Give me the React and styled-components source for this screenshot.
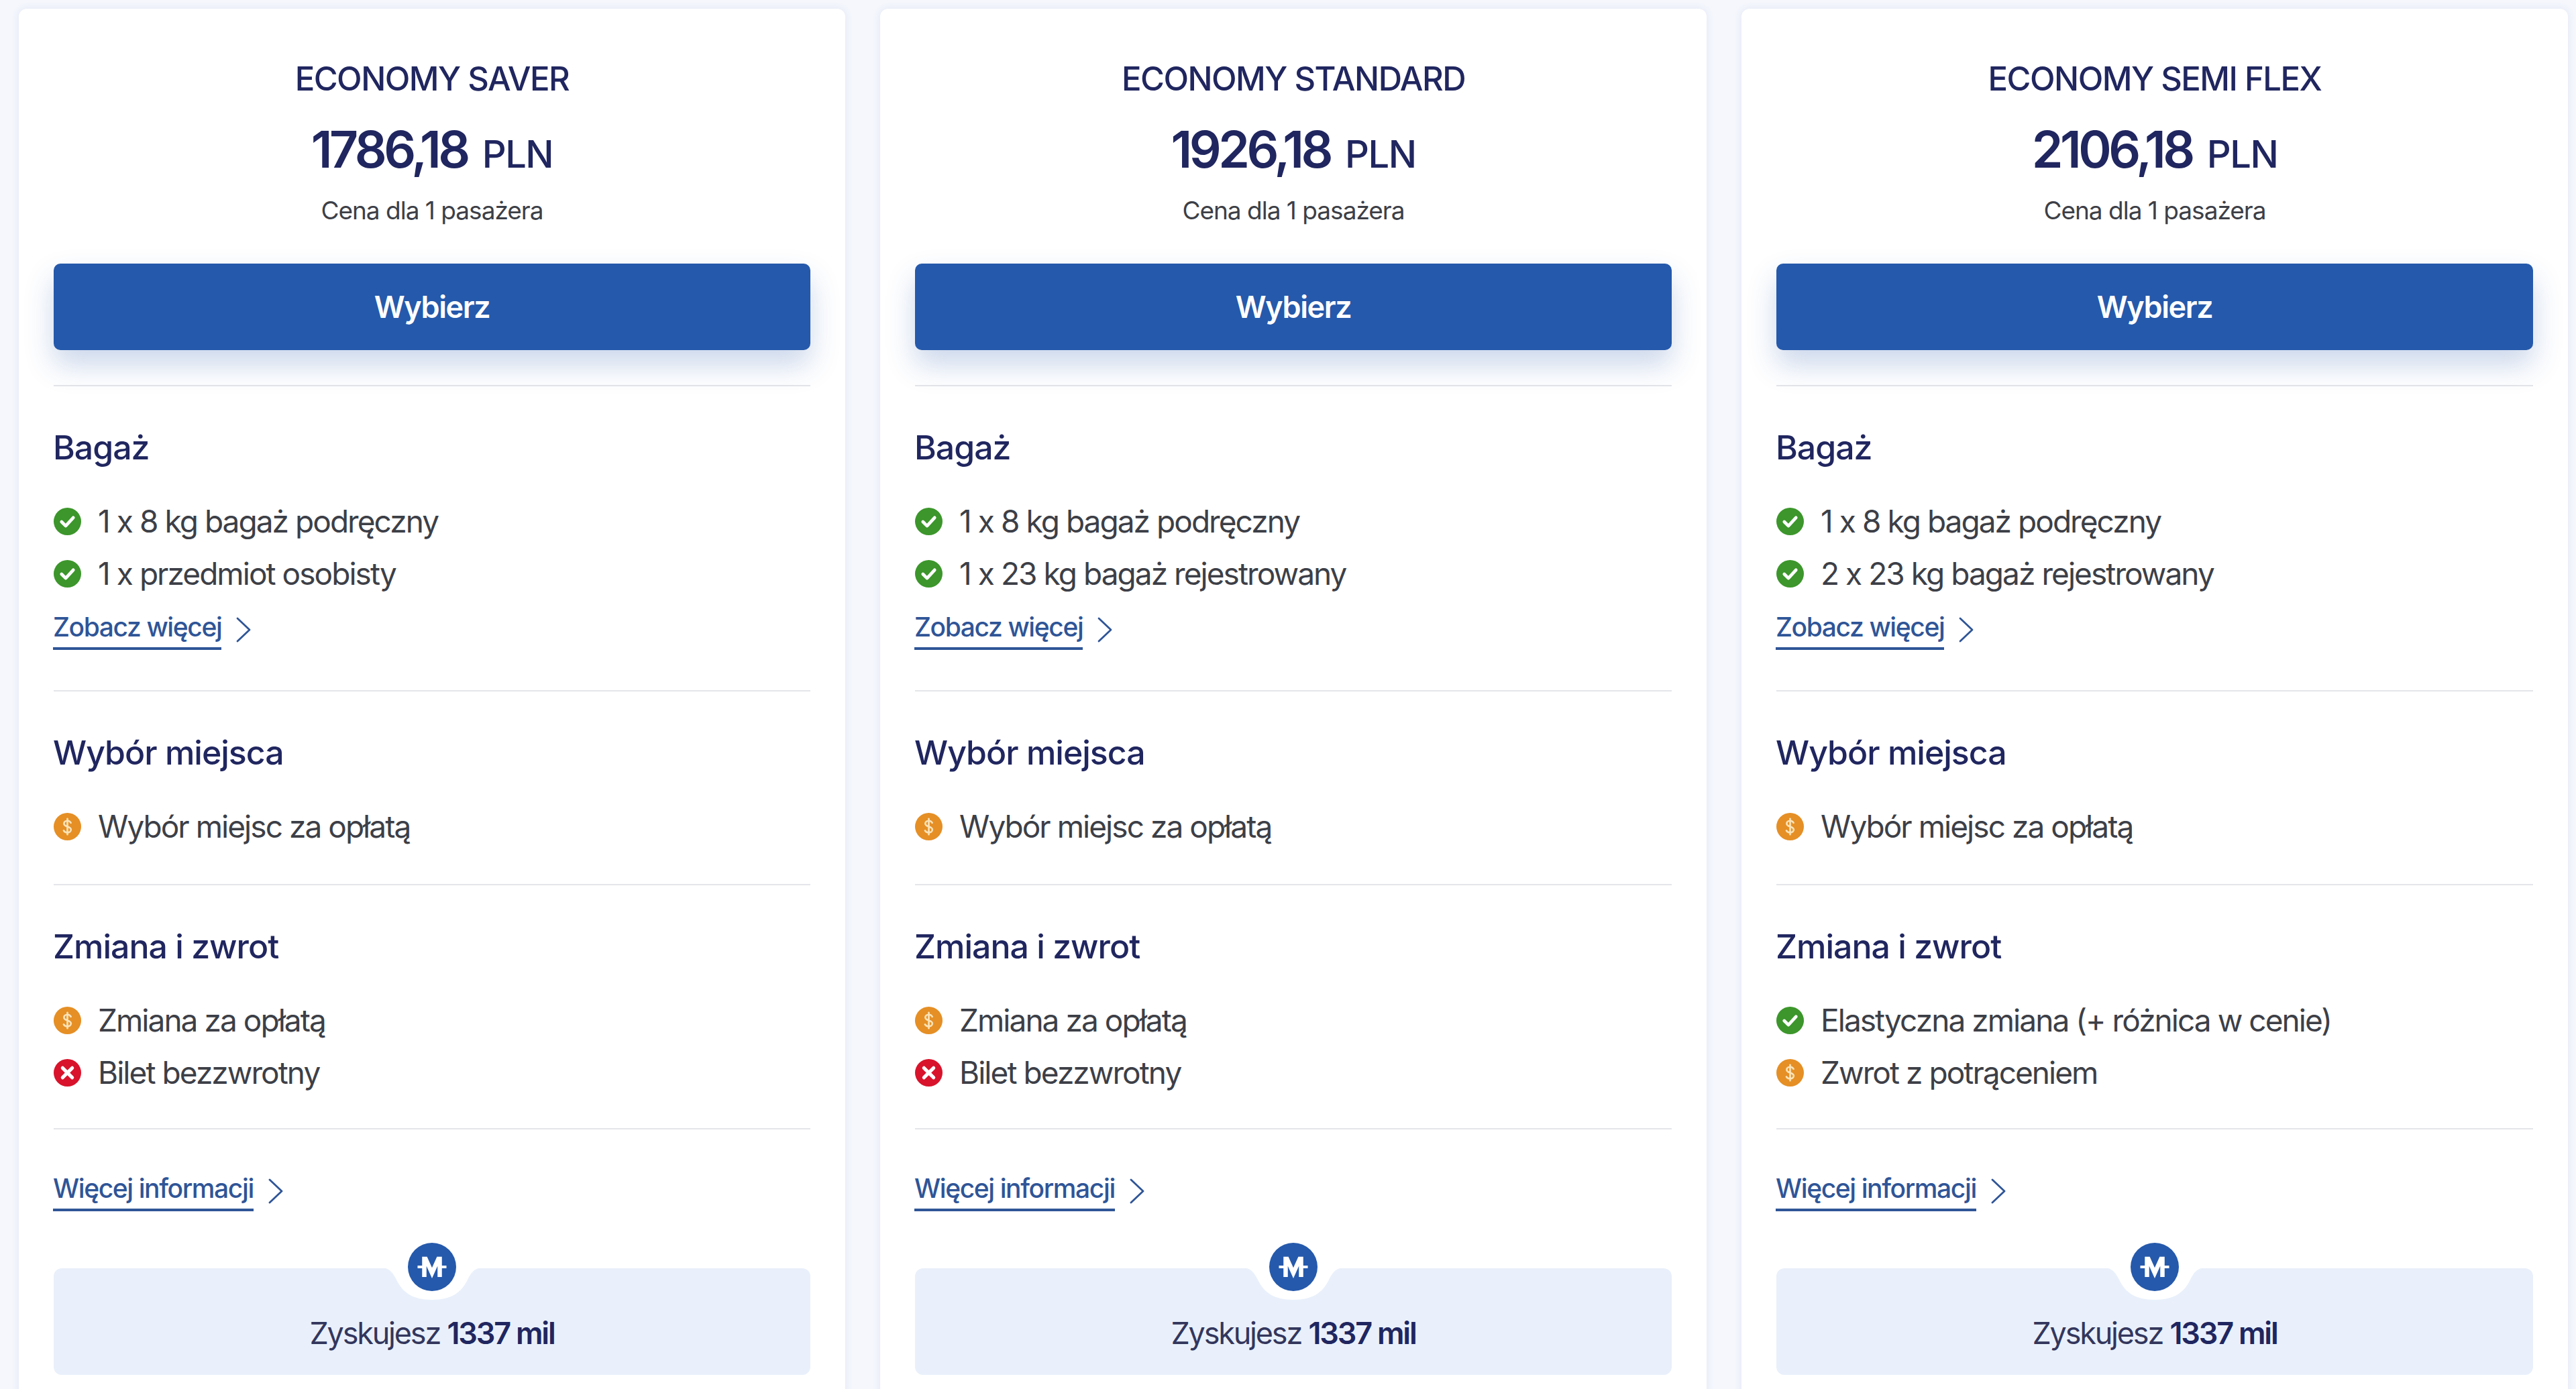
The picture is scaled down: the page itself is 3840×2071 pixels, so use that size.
import React from 'react';
import styled, { createGlobalStyle } from 'styled-components';

const GlobalStyle = createGlobalStyle`
  html, body {
    margin: 0;
    height: 2071px;
    overflow: hidden;
    background: #f5f7fd;
    font-family: Inter, "Liberation Sans", sans-serif;
  }
`;

const fares = [
  {
    name: 'ECONOMY SAVER',
    price: '1786,18',
    baggage: [['ok', '1 x 8 kg bagaż podręczny'], ['ok', '1 x przedmiot osobisty']],
    change: [['paid', 'Zmiana za opłatą'], ['no', 'Bilet bezzwrotny']]
  },
  {
    name: 'ECONOMY STANDARD',
    price: '1926,18',
    baggage: [['ok', '1 x 8 kg bagaż podręczny'], ['ok', '1 x 23 kg bagaż rejestrowany']],
    change: [['paid', 'Zmiana za opłatą'], ['no', 'Bilet bezzwrotny']]
  },
  {
    name: 'ECONOMY SEMI FLEX',
    price: '2106,18',
    baggage: [['ok', '1 x 8 kg bagaż podręczny'], ['ok', '2 x 23 kg bagaż rejestrowany']],
    change: [['ok', 'Elastyczna zmiana (+ różnica w cenie)'], ['paid', 'Zwrot z potrąceniem']]
  }
];

// ========== Basic Components =============
const Page = styled.div`
  display: grid;
  grid-template-columns: repeat(3, 1232px);
  column-gap: 52px;
  padding: 13px 0 0 28px;
`;

const Card = styled.article`
  box-sizing: border-box;
  height: 2100px;
  padding: 75px 52px 0;
  background: #fff;
  border-radius: 12px 12px 0 0;
  box-shadow: 0 0 12px rgba(60, 80, 160, 0.1);
`;

const Header = styled.header`
  padding-bottom: 52px;
  border-bottom: 2px solid #e4e5ea;
  text-align: center;
`;

const FareName = styled.h2`
  margin: 0;
  font-size: 49px;
  line-height: 60px;
  font-weight: 500;
  letter-spacing: -1.5px;
  color: #20265f;
`;

const Price = styled.div`
  margin-top: 30px;
  font-size: 75px;
  line-height: 90px;
  font-weight: 600;
  letter-spacing: -4.5px;
  color: #20265f;
`;

const Currency = styled.span`
  margin-left: 22px;
  font-size: 56px;
  font-weight: 500;
  letter-spacing: -1.5px;
`;

const PriceNote = styled.div`
  margin-top: 14px;
  font-size: 37px;
  line-height: 50px;
  letter-spacing: -1px;
  color: #3d3f47;
`;

const SelectButton = styled.button`
  display: block;
  width: 100%;
  height: 129px;
  margin-top: 54px;
  padding: 0;
  border: 0;
  border-radius: 10px;
  background: #2559ab;
  box-shadow: 0 22px 44px rgba(37, 89, 171, 0.24);
  color: #fff;
  font-family: inherit;
  font-size: 45px;
  font-weight: 600;
  letter-spacing: -1.4px;
`;

const Section = styled.section`
  padding: 61px 0 ${(props) => props.$bottom}px;
  border-bottom: 2px solid #e4e5ea;
`;

const SectionTitle = styled.h3`
  margin: 0 0 0 -1px;
  font-size: 50px;
  line-height: 60px;
  font-weight: 500;
  letter-spacing: -1px;
  color: #20265f;
`;

const List = styled.ul`
  margin: 41px 0 0;
  padding: 0;
  list-style: none;
`;

const Row = styled.li`
  display: flex;
  align-items: center;
  gap: 25px;
  height: 78px;
  font-size: 46px;
  letter-spacing: -1.95px;
  color: #3d3f47;
`;

const LinkLine = styled.div`
  display: flex;
  align-items: flex-start;
  gap: 22px;
  margin-top: ${(props) => props.$top}px;
`;

const TextLink = styled.a`
  margin-left: -1px;
  padding-bottom: 5px;
  border-bottom: 4px solid #2f5597;
  font-size: 39px;
  line-height: 50px;
  font-weight: 500;
  letter-spacing: -1.4px;
  color: #2f5597;
`;

const Miles = styled.div`
  position: relative;
  height: 159px;
  margin-top: 85px;
  border-radius: 12px;
  background: #e9f0fb;
  display: flex;
  align-items: flex-end;
  justify-content: center;
`;

const MilesText = styled.div`
  padding-bottom: 34px;
  font-size: 45px;
  line-height: 56px;
  letter-spacing: -2.2px;
  color: #33365c;

  b {
    font-weight: 600;
    color: #20265f;
  }
`;

const Notch = styled.svg`
  position: absolute;
  top: -1px;
  left: 50%;
  width: 156px;
  height: 48px;
  margin-left: -78px;
`;

const MilesBadge = styled.svg`
  position: absolute;
  top: -38px;
  left: 50%;
  width: 72px;
  height: 72px;
  margin-left: -36px;
`;

const IconBox = styled.svg`
  flex: none;
  width: 41px;
  height: 41px;
`;

const Chevron = styled.svg`
  flex: none;
  width: 22px;
  height: 38px;
  margin-top: 10px;
`;

// ========== Compound Components ==========
const StatusIcon = ({ kind }) => {
  if (kind === 'ok') {
    return (
      <IconBox viewBox="0 0 40 40">
        <circle cx="20" cy="20" r="20" fill="#3c962b" />
        <path d="M11.500 20.500l6 6 11-12" fill="none" stroke="#fff" strokeWidth="4.600" strokeLinecap="round" strokeLinejoin="round" />
      </IconBox>
    );
  }
  if (kind === 'no') {
    return (
      <IconBox viewBox="0 0 40 40">
        <circle cx="20" cy="20" r="20" fill="#d8132b" />
        <path d="M13 13l14 14M27 13L13 27" fill="none" stroke="#fff" strokeWidth="5" strokeLinecap="round" />
      </IconBox>
    );
  }
  return (
    <IconBox viewBox="0 0 40 40">
      <circle cx="20" cy="20" r="20" fill="#e58f25" />
      <path d="M25 14.500c-1-2-3-3-5-3-3 0-5 1.700-5 4.200 0 5.600 10.200 3 10.200 8.800 0 2.500-2.300 4.200-5.200 4.200-2.300 0-4.300-1-5.400-3M20 8.500v23" fill="none" stroke="#fbe3b8" strokeWidth="2.600" strokeLinecap="round" />
    </IconBox>
  );
};

const MoreLink = ({ label, top }) => (
  <LinkLine $top={top}>
    <TextLink>{label}</TextLink>
    <Chevron viewBox="0 0 22 38">
      <path d="M2 2l18 17L2 36" fill="none" stroke="#2f5597" strokeWidth="2.800" strokeLinecap="round" strokeLinejoin="round" />
    </Chevron>
  </LinkLine>
);

const Items = ({ items }) => (
  <List>
    {items.map(([kind, text]) => (
      <Row key={text}>
        <StatusIcon kind={kind} />
        {text}
      </Row>
    ))}
  </List>
);

const MilesPanel = () => (
  <Miles>
    <Notch viewBox="0 0 156 48">
      <path d="M0 0h156c-12 0-18 4-25 18-9 19-24 30-53 30s-44-11-53-30C18 4 12 0 0 0z" fill="#fff" />
    </Notch>
    <MilesBadge viewBox="0 0 72 72">
      <circle cx="36" cy="36" r="36" fill="#2559ab" />
      <path d="M14.500 36h9M48.500 36h9" fill="none" stroke="#fff" strokeWidth="4" />
      <path d="M24.500 51V24h2l9.500 21 9.500-21h2v27" fill="none" stroke="#fff" strokeWidth="6.500" strokeLinejoin="miter" />
    </MilesBadge>
    <MilesText>Zyskujesz <b>1337 mil</b></MilesText>
  </Miles>
);

const FareCard = ({ fare }) => (
  <Card>
    <Header>
      <FareName>{fare.name}</FareName>
      <Price>{fare.price}<Currency>PLN</Currency></Price>
      <PriceNote>Cena dla 1 pasażera</PriceNote>
      <SelectButton>Wybierz</SelectButton>
    </Header>
    <Section $bottom={60}>
      <SectionTitle>Bagaż</SectionTitle>
      <Items items={fare.baggage} />
      <MoreLink label="Zobacz więcej" top={16} />
    </Section>
    <Section $bottom={47}>
      <SectionTitle>Wybór miejsca</SectionTitle>
      <Items items={[['paid', 'Wybór miejsc za opłatą']]} />
    </Section>
    <Section $bottom={44}>
      <SectionTitle>Zmiana i zwrot</SectionTitle>
      <Items items={fare.change} />
    </Section>
    <MoreLink label="Więcej informacji" top={63} />
    <MilesPanel />
  </Card>
);

export default function App() {
  return (
    <>
      <GlobalStyle />
      <Page>
        {fares.map((fare) => (
          <FareCard key={fare.name} fare={fare} />
        ))}
      </Page>
    </>
  );
}
